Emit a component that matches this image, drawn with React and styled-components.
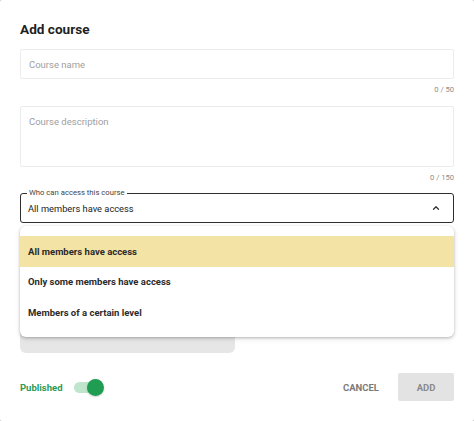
import React from "react";
import styled, { createGlobalStyle } from "styled-components";

const GlobalStyle = createGlobalStyle`
  html, body {
    margin: 0;
    padding: 0;
    background: #c4c4c4;
  }
  body {
    font-family: Roboto, "Liberation Sans", sans-serif;
  }
  * {
    box-sizing: border-box;
  }
`;

const OPTIONS = [
  "All members have access",
  "Only some members have access",
  "Members of a certain level",
];

function ChevronUp() {
  return (
    <svg width="10" height="10" viewBox="0 0 24 24" fill="none">
      <path
        d="M6 15l6-6 6 6"
        stroke="#333"
        strokeWidth="3"
        strokeLinecap="round"
        strokeLinejoin="round"
      />
    </svg>
  );
}

function App() {
  const selected = 0;

  return (
    <>
      <GlobalStyle />
      <SDialog>
        <STitle>Add course</STitle>

        <SField placeholder="Course name" />
        <SCounter>0 / 50</SCounter>

        <SArea placeholder="Course description" />
        <SCounter>0 / 150</SCounter>

        <SSelectWrap>
          <SSelect>
            <SLegend>Who can access this course</SLegend>
            <SValue>{OPTIONS[selected]}</SValue>
            <ChevronUp />
          </SSelect>
          <SMenu>
            {OPTIONS.map((o, i) => (
              <SOption key={o} active={i === selected}>
                {o}
              </SOption>
            ))}
          </SMenu>
        </SSelectWrap>

        <SHidden />

        <SFooter>
          <SPublished>
            <SPublishedLabel>Published</SPublishedLabel>
            <SToggle>
              <SThumb />
            </SToggle>
          </SPublished>
          <SActions>
            <SCancel>CANCEL</SCancel>
            <SAdd>ADD</SAdd>
          </SActions>
        </SFooter>
      </SDialog>
    </>
  );
}

export default App;

const SDialog = styled.div`
  width: 474px;
  height: 421px;
  background: #fff;
  border-radius: 2px;
  padding: 20px;
  display: flex;
  flex-direction: column;
`;

const STitle = styled.h2`
  margin: 0;
  font-size: 13.6px;
  line-height: 18px;
  font-weight: 700;
  color: #1f1f1f;
`;

const SField = styled.input`
  margin-top: 11px;
  height: 30px;
  width: 100%;
  border: 1px solid #ececec;
  border-radius: 2px;
  padding: 0 8px;
  font-family: inherit;
  font-size: 9.5px;
  outline: none;
  &::placeholder {
    color: #9e9e9e;
  }
`;

const SArea = styled.textarea`
  margin-top: 11px;
  height: 61px;
  width: 100%;
  border: 1px solid #ececec;
  border-radius: 2px;
  padding: 9px 8px;
  font-family: inherit;
  font-size: 9.5px;
  line-height: 12px;
  resize: none;
  outline: none;
  &::placeholder {
    color: #9e9e9e;
  }
`;

const SCounter = styled.div`
  margin-top: 6px;
  text-align: right;
  font-size: 7.6px;
  line-height: 10px;
  color: #8c8c8c;
`;

const SSelectWrap = styled.div`
  position: relative;
  margin-top: 10px;
`;

const SSelect = styled.div`
  position: relative;
  height: 30px;
  border: 1.5px solid #2e2e2e;
  border-radius: 3px;
  display: flex;
  align-items: center;
  justify-content: space-between;
  padding: 0 12px 0 7px;
`;

const SLegend = styled.span`
  position: absolute;
  left: 6px;
  top: -6px;
  background: #fff;
  padding: 0 2px;
  font-size: 7.7px;
  line-height: 10px;
  color: #444;
`;

const SValue = styled.span`
  font-size: 9.3px;
  color: #222;
`;

const SMenu = styled.div`
  position: absolute;
  top: 33px;
  left: 0;
  right: 0;
  height: 111px;
  padding-top: 10px;
  background: #fff;
  border-radius: 6px;
  box-shadow: 0 1px 3px rgba(0, 0, 0, 0.25), 0 2px 6px rgba(0, 0, 0, 0.08);
  z-index: 2;
`;

const SOption = styled.div`
  height: 30.5px;
  display: flex;
  align-items: center;
  padding: 0 8px;
  font-size: 9.5px;
  font-weight: 700;
  color: #2b2b2b;
  background: ${(p) => (p.active ? "#f3e3a5" : "transparent")};
`;

const SHidden = styled.div`
  margin-top: 10px;
  width: 215px;
  height: 120px;
  background: #e6e6e6;
  border-radius: 6px;
`;

const SFooter = styled.div`
  margin-top: auto;
  height: 28px;
  display: flex;
  align-items: center;
  justify-content: space-between;
`;

const SPublished = styled.div`
  display: flex;
  align-items: center;
  gap: 11px;
`;

const SPublishedLabel = styled.span`
  font-size: 9.5px;
  font-weight: 700;
  color: #2b9a55;
`;

const SToggle = styled.div`
  position: relative;
  width: 27px;
  height: 11px;
  border-radius: 6px;
  background: #bfe6cd;
`;

const SThumb = styled.div`
  position: absolute;
  right: -3px;
  top: -3px;
  width: 17px;
  height: 17px;
  border-radius: 50%;
  background: #1f9d52;
  box-shadow: 0 1px 2px rgba(0, 0, 0, 0.2);
`;

const SActions = styled.div`
  display: flex;
  align-items: center;
  gap: 19px;
`;

const SCancel = styled.button`
  border: none;
  background: transparent;
  padding: 0;
  font-family: inherit;
  font-size: 9.5px;
  font-weight: 700;
  color: #7a7a7a;
`;

const SAdd = styled.button`
  width: 56px;
  height: 28px;
  border: none;
  border-radius: 2px;
  background: #e3e3e3;
  font-family: inherit;
  font-size: 9.5px;
  font-weight: 700;
  color: #8a8a8a;
`;
